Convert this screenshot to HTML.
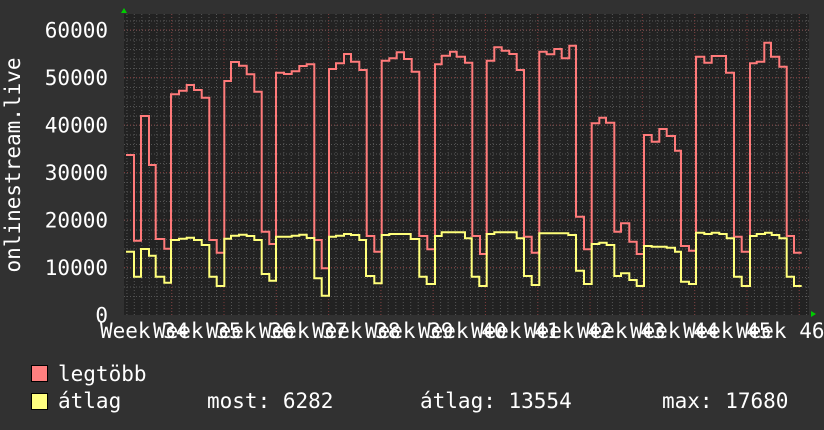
<!DOCTYPE html>
<html><head><meta charset="utf-8"><style>
html,body{margin:0;padding:0;background:#313131;width:824px;height:430px;overflow:hidden}
svg{display:block}
text{font-family:"DejaVu Sans Mono","Liberation Mono",monospace;fill:#fff;font-size:21px}
</style></head><body>
<svg width="824" height="430" viewBox="0 0 824 430" xmlns="http://www.w3.org/2000/svg">
<rect width="824" height="430" fill="#313131"/>
<rect x="124" y="14" width="685" height="301" fill="#222"/>
<g id="grid">
<g stroke="#555" stroke-width="1" stroke-dasharray="1,2">
<path id="minh" d="M124,296.5H809M124,287H809M124,277.5H809M124,268H809M124,258.5H809M124,249H809M124,239.5H809M124,230H809M124,220.5H809M124,211H809M124,201.5H809M124,192H809M124,182.5H809M124,173H809M124,163.5H809M124,154H809M124,144.5H809M124,135H809M124,125.5H809M124,116H809M124,106.5H809M124,97H809M124,87.5H809M124,78H809M124,68.5H809M124,59H809M124,49.5H809M124,40H809M124,30.5H809M124,21H809"/>
</g>
<g stroke="#555" stroke-width="1" stroke-dasharray="1,2" id="minv"></g>
<g stroke="#7a3a3a" stroke-width="1" stroke-dasharray="1,2">
<path d="M124,267.5H809M124,220H809M124,172.5H809M124,125H809M124,77.5H809M124,30H809"/>
<path d="M171.7,14V315M224,14V315M276.3,14V315M328.6,14V315M380.9,14V315M433.2,14V315M485.5,14V315M537.8,14V315M590.1,14V315M642.4,14V315M694.7,14V315M747,14V315M799.3,14V315"/>
</g>
</g>
<path fill="#0c0" d="M121,13L124,8L127,13Z"/>
<path fill="#0c0" d="M811,311L816,314L811,317Z"/>
<path fill="none" stroke="#ff7a7a" stroke-width="2" d="M126,155 H134 V240.7 H141 V116 H149 V165 H155.7 V239 H164.3 V248.7 H171 V94.3 H179 V90.7 H186.7 V85 H194 V90 H201.7 V97.7 H209.3 V240 H216.7 V252.7 H224.3 V81 H231 V62 H239 V65.7 H246.7 V74.3 H254.3 V91.7 H261.7 V231.7 H269.3 V244 H276 V72.7 H284 V74 H291.7 V71.3 H299.3 V66 H306.7 V64.3 H314.3 V240 H321.7 V268.3 H329 V69 H336 V63.3 H344 V54 H351 V61.7 H359.3 V70 H366.7 V236 H374.3 V251.7 H381.7 V60.7 H389.3 V58.3 H396.7 V52.3 H404 V59 H411.7 V71.7 H419.3 V236 H427.3 V249.3 H435 V64.3 H441.7 V55.7 H450 V51.7 H456.7 V56.7 H465 V62.7 H472.3 V236 H480 V254 H486.7 V60.7 H494.3 V47.3 H501.7 V50.7 H509.3 V54 H516.7 V70 H524 V236.7 H531.7 V252.7 H539.3 V51.7 H546.7 V54.3 H554.3 V49 H561.7 V58.3 H569.3 V45.7 H576 V216.7 H584 V249.3 H591.7 V123.3 H599.3 V117.7 H606 V122.7 H614.3 V231.7 H621 V223.3 H629.3 V241.7 H636.7 V254 H644 V135 H651.7 V141.7 H659.3 V129 H666.7 V136 H675 V150.7 H681 V246 H689 V250.7 H696 V56.7 H704.3 V62.7 H711.7 V56 H726 V72.7 H734 V236.7 H741.7 V251.7 H750 V63.3 H756.7 V61.7 H764.3 V42.7 H771 V56.7 H779.3 V66.7 H786.7 V236 H794 V252.7 H801.7"/>
<path fill="none" stroke="#ffff7a" stroke-width="2" d="M126,251.7 H134 V276.7 H141 V249 H149 V255.7 H155.7 V276.7 H164.3 V282.7 H171 V240 H179 V238.7 H186.7 V237.7 H194 V240 H201.7 V245 H209.3 V276.7 H216.7 V286 H224.3 V238.7 H231 V235.7 H239 V234.7 H246.7 V236 H254.3 V240 H261.7 V274 H269.3 V280.7 H276 V236.7 H291.7 V235.7 H299.3 V234.7 H306.7 V238 H314.3 V278.3 H321.7 V295.7 H329 V236.7 H336 V235.7 H344 V234 H351 V235 H359.3 V240 H366 V276 H374.3 V283.3 H381.7 V235 H389.3 V234 H410.7 V239 H419.3 V276.7 H426.7 V284 H435 V236 H441.7 V232.3 H465 V238.3 H471.7 V276.7 H479.3 V286 H486.7 V234 H494.3 V232.3 H516.7 V238.3 H524 V276 H531.7 V285 H539.3 V233.3 H568.3 V235 H576 V270.7 H584 V284 H591.7 V244 H599.3 V242.7 H606.7 V245 H614.3 V276 H621 V273.3 H629.3 V280 H636.7 V286 H644 V246 H651.7 V246.7 H666.7 V247.7 H675 V251.7 H681 V281.7 H689 V284 H696 V232.7 H704.3 V234 H711.7 V232.7 H719.3 V234 H726.7 V238.3 H734 V276.7 H741.7 V286 H750 V236 H756.7 V234 H765 V232.7 H771.7 V235 H779.3 V238.3 H786.7 V276.7 H794 V286 H801.7"/>
<g text-anchor="end">
<text x="108" y="37.5">60000</text>
<text x="108" y="85">50000</text>
<text x="108" y="132.5">40000</text>
<text x="108" y="180">30000</text>
<text x="108" y="227.5">20000</text>
<text x="108" y="275">10000</text>
<text x="108" y="322.5">0</text>
</g>
<text transform="translate(20,165) rotate(-90)" text-anchor="middle">onlinestream.live</text>
<g>
<text x="100" y="338">Week 34</text>
<text x="153" y="338">Week 35</text>
<text x="206" y="338">Week 36</text>
<text x="259" y="338">Week 37</text>
<text x="312" y="338">Week 38</text>
<text x="365" y="338">Week 39</text>
<text x="418" y="338">Week 40</text>
<text x="471" y="338">Week 41</text>
<text x="524" y="338">Week 42</text>
<text x="577" y="338">Week 43</text>
<text x="630" y="338">Week 44</text>
<text x="683" y="338">Week 45</text>
<text x="736" y="338">Week 46</text>
</g>
<rect x="31.5" y="365.5" width="16" height="16" fill="#ff7f7f" stroke="#000" stroke-width="1"/>
<rect x="31.5" y="393.5" width="16" height="16" fill="#ffff7f" stroke="#000" stroke-width="1"/>
<text x="58" y="381">legtöbb</text>
<text x="58" y="408">átlag</text>
<text x="207" y="408">most: 6282</text>
<text x="420" y="408">átlag: 13554</text>
<text x="662" y="408">max: 17680</text>
</svg>
<script>
(function(){var g=document.getElementById('minv');var d='';for(var n=-6;n<=86;n++){var x=171.7+7.47*n;if(x>124&&x<809)d+='M'+x.toFixed(1)+',14V315';}var p=document.createElementNS('http://www.w3.org/2000/svg','path');p.setAttribute('d',d);g.appendChild(p);})();
</script>
</body></html>
